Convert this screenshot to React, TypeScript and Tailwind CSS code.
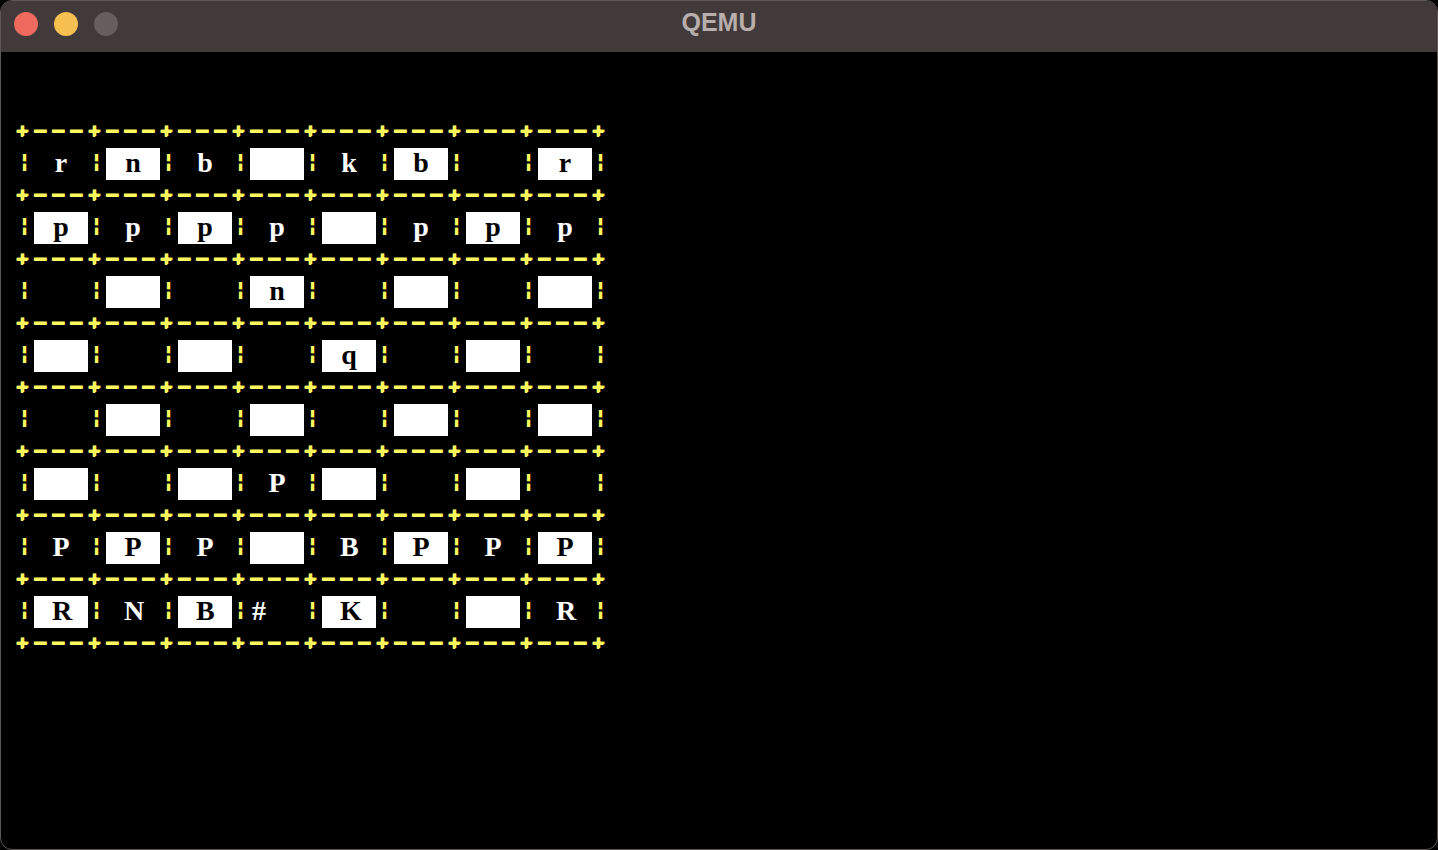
import React, { Fragment } from "react";
import clsx from "clsx";

// 8 ranks, each square is 3 text columns wide
const BOARD: string[][] = [
  [" r ", " n ", " b ", "   ", " k ", " b ", "   ", " r "],
  [" p ", " p ", " p ", " p ", "   ", " p ", " p ", " p "],
  ["   ", "   ", "   ", " n ", "   ", "   ", "   ", "   "],
  ["   ", "   ", "   ", "   ", " q ", "   ", "   ", "   "],
  ["   ", "   ", "   ", "   ", "   ", "   ", "   ", "   "],
  ["   ", "   ", "   ", " P ", "   ", "   ", "   ", "   "],
  [" P ", " P ", " P ", "   ", " B ", " P ", " P ", " P "],
  [" R ", " N ", " B ", "#  ", " K ", "   ", "   ", " R "],
];

// yellow frame glyphs, thickened a bit to look like the VGA font
const frame = "font-['DejaVu_Sans_Mono',monospace] font-bold text-[#fcf75e] leading-none";

function Plus() {
  return (
    <span className="flex w-[18px] h-[32px] items-center justify-start">
      <span className={clsx(frame, "text-[20px] -translate-y-[2px] [text-shadow:1px_0_0_#fcf75e,0_1px_0_#fcf75e]")}>+</span>
    </span>
  );
}

function Dash() {
  return (
    <span className="flex w-[18px] h-[32px] items-center justify-start">
      <span className={clsx(frame, "text-[21px] -translate-y-[2px] [text-shadow:0_1px_0_#fcf75e]")}>—</span>
    </span>
  );
}

function Bar() {
  return (
    <span className="flex w-[18px] h-[32px] items-center justify-start">
      <span className={clsx(frame, "text-[20px] ml-[2px] -translate-y-[3px] [text-shadow:1px_0_0_#fcf75e]")}>¦</span>
    </span>
  );
}

function BorderLine() {
  return (
    <div className="flex h-[32px]">
      {Array.from({ length: 33 }, (_, i) => (i % 4 === 0 ? <Plus key={i} /> : <Dash key={i} />))}
    </div>
  );
}

function Square({ text, light }: { text: string; light: boolean }) {
  return (
    <span className={clsx("flex w-[54px] h-[32px]", light ? "bg-white text-black" : "text-white")}>
      {text.split("").map((ch, i) => (
        <span
          key={i}
          className="w-[18px] text-center leading-[32px] text-[28px] font-bold font-['Liberation_Serif',serif] -translate-y-[1px]"
        >
          {ch === " " ? "\u00a0" : ch}
        </span>
      ))}
    </span>
  );
}

function RankLine({ cells, row }: { cells: string[]; row: number }) {
  return (
    <div className="flex h-[32px]">
      {cells.map((cell, ci) => (
        <Fragment key={ci}>
          <Bar />
          <Square text={cell} light={(row + ci) % 2 === 1} />
        </Fragment>
      ))}
      <Bar />
    </div>
  );
}

export default function App() {
  return (
    <div className="w-[1438px] h-[850px] bg-black">
      <div className="h-full flex flex-col rounded-[12px] border border-[#5d5756] overflow-hidden bg-black">
        {/* title bar */}
        <div className="h-[51px] shrink-0 bg-[#41393a] grid grid-cols-[1fr_auto_1fr]">
          <div className="flex gap-[16px] pl-[13px] pt-[11px]">
            <span className="w-[24px] h-[24px] rounded-full bg-[#ee6a5f]" />
            <span className="w-[24px] h-[24px] rounded-full bg-[#f5c04f]" />
            <span className="w-[24px] h-[24px] rounded-full bg-[#665e5c]" />
          </div>
          <div className="pt-[9px] text-[25px] leading-none font-bold font-['Liberation_Sans',sans-serif] text-[#b8afad]">
            QEMU
          </div>
          <div />
        </div>

        {/* text-mode screen */}
        <div className="flex-1 pl-[15px] pt-[64px]">
          {BOARD.map((cells, r) => (
            <Fragment key={r}>
              <BorderLine />
              <RankLine cells={cells} row={r} />
            </Fragment>
          ))}
          <BorderLine />
        </div>
      </div>
    </div>
  );
}
